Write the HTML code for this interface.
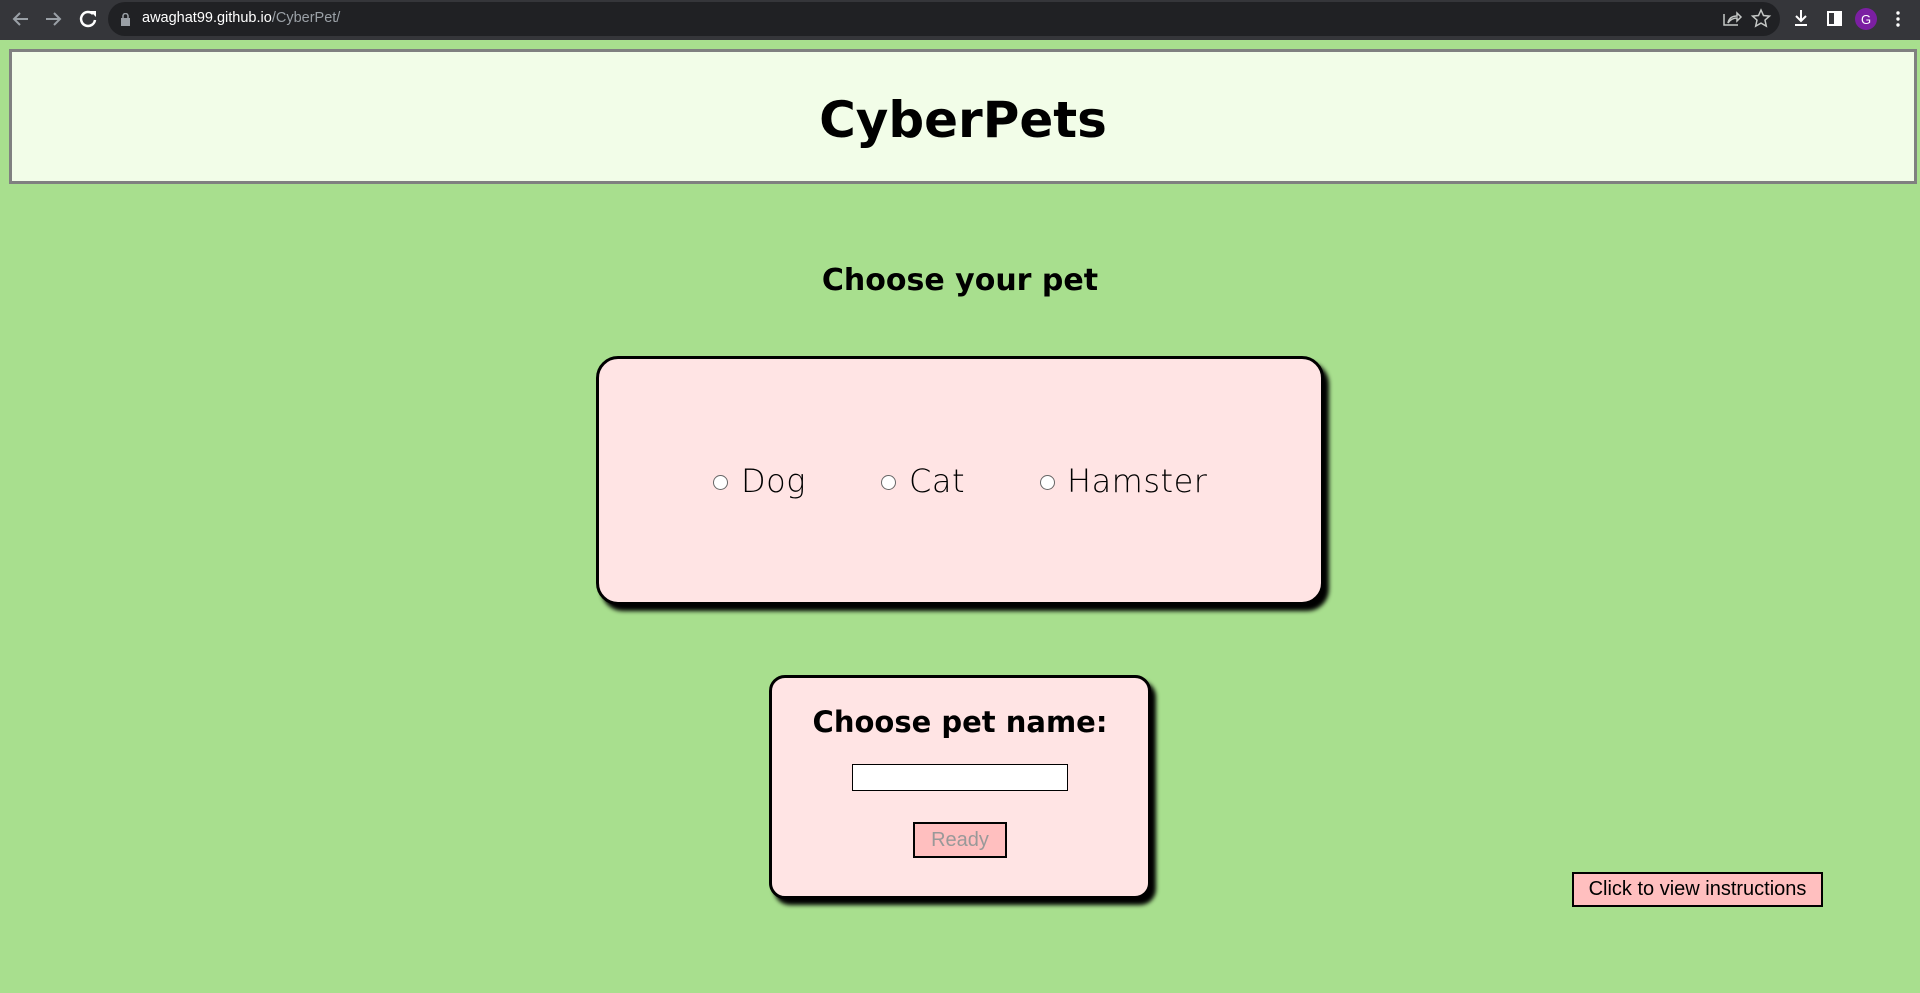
<!DOCTYPE html>
<html><head><meta charset="utf-8"><style>
*{box-sizing:border-box;margin:0;padding:0}
html,body{width:1920px;height:993px;overflow:hidden;background:#a8df8e;font-family:"Liberation Sans",sans-serif}
.bar{position:absolute;left:0;top:0;width:1920px;height:40px;background:#35363a}
.pill{position:absolute;left:108px;top:2px;width:1672px;height:34px;border-radius:17px;background:#202124}
.url{position:absolute;left:142px;top:10px;font-size:14.5px;color:#fff}
.url span{color:#9aa0a6}
.hdr{position:absolute;left:9px;top:49px;width:1908px;height:135px;background:#f2fde8;border:3px solid #808080}
.hdr h1{position:absolute;left:0;right:0;top:39px;text-align:center;font-family:"DejaVu Sans",sans-serif;font-weight:bold;font-size:50px;color:#000}
h2{position:absolute;left:0;width:1920px;text-align:center;font-family:"DejaVu Sans",sans-serif;font-weight:bold;color:#000}
.box{position:absolute;background:#ffe4e4;border:3px solid #000;border-radius:20px;box-shadow:5px 6px 4px #000}
.r{position:absolute;width:15px;height:15px;border-radius:50%;border:1px solid #666;background:#fff}
.lbl{position:absolute;font-family:"DejaVu Sans",sans-serif;font-size:32px;font-weight:200;color:#000;top:462px;letter-spacing:0.5px}
.btn{position:absolute;background:#ffbfbf;border:2px solid #000;text-align:center;font-size:20px}
</style></head><body>
<div class="bar">
<svg width="110" height="40" style="position:absolute;left:0;top:0">
<g stroke="#9aa0a6" stroke-width="2" fill="none"><path d="M28 19H14M20 13l-6 6 6 6"/><path d="M46 19h14M54 13l6 6-6 6"/></g>
<path d="M93 14a7 7 0 1 0 2 6" stroke="#fff" stroke-width="2.5" fill="none"/><path d="M90 11h6v6z" fill="#fff"/>
</svg>
<div class="pill"></div>
<svg width="12" height="14" style="position:absolute;left:120px;top:13px"><rect x="1" y="5" width="9" height="8" fill="#9aa0a6"/><path d="M3 6V3a2.5 2.5 0 0 1 5 0v3" stroke="#9aa0a6" stroke-width="1.5" fill="none"/></svg>
<div class="url">awaghat99.github.io<span>/CyberPet/</span></div>
<svg width="220" height="40" style="position:absolute;left:1700px;top:0">
<g stroke="#c4c7c5" stroke-width="1.5" fill="none"><path d="M24 14v11h14"/><path d="M28 23c1-5 4-7 9-7v-3l4 4-4 4v-3c-4 0-7 2-9 5z"/><path d="M61 10l2.5 5.5 6 .6-4.5 4 1.3 6-5.3-3-5.3 3 1.3-6-4.5-4 6-.6z"/></g>
<g stroke="#fff" stroke-width="2" fill="none"><path d="M101 10v11M96 16l5 5 5-5M95 25h12"/><rect x="128" y="12" width="13" height="13"/></g>
<rect x="134" y="12" width="7" height="13" fill="#fff"/>
<circle cx="166" cy="19" r="11" fill="#7b1fa2"/><text x="166" y="24" fill="#fff" font-size="13" text-anchor="middle" font-family="Liberation Sans">G</text>
<g fill="#fff"><circle cx="198" cy="13" r="1.7"/><circle cx="198" cy="19" r="1.7"/><circle cx="198" cy="25" r="1.7"/></g>
</svg>
</div>
<div class="hdr"><h1>CyberPets</h1></div>
<h2 style="top:263px;font-size:30px">Choose your pet</h2>
<div class="box" style="left:596px;top:356px;width:728px;height:249px;border-radius:22px"></div>
<div class="r" style="left:713px;top:475px"></div><div class="lbl" style="left:741px">Dog</div>
<div class="r" style="left:881px;top:475px"></div><div class="lbl" style="left:909px">Cat</div>
<div class="r" style="left:1040px;top:475px"></div><div class="lbl" style="left:1067px">Hamster</div>
<div class="box" style="left:769px;top:675px;width:382px;height:224px;border-radius:16px"></div>
<h2 style="top:705px;font-size:29px">Choose pet name:</h2>
<div style="position:absolute;left:852px;top:764px;width:216px;height:27px;background:#fff;border:1px solid #000"></div>
<div class="btn" style="left:913px;top:822px;width:94px;height:36px;line-height:32px;color:#999">Ready</div>
<div class="btn" style="left:1572px;top:872px;width:251px;height:35px;line-height:31px;color:#000">Click to view instructions</div>
</body></html>
